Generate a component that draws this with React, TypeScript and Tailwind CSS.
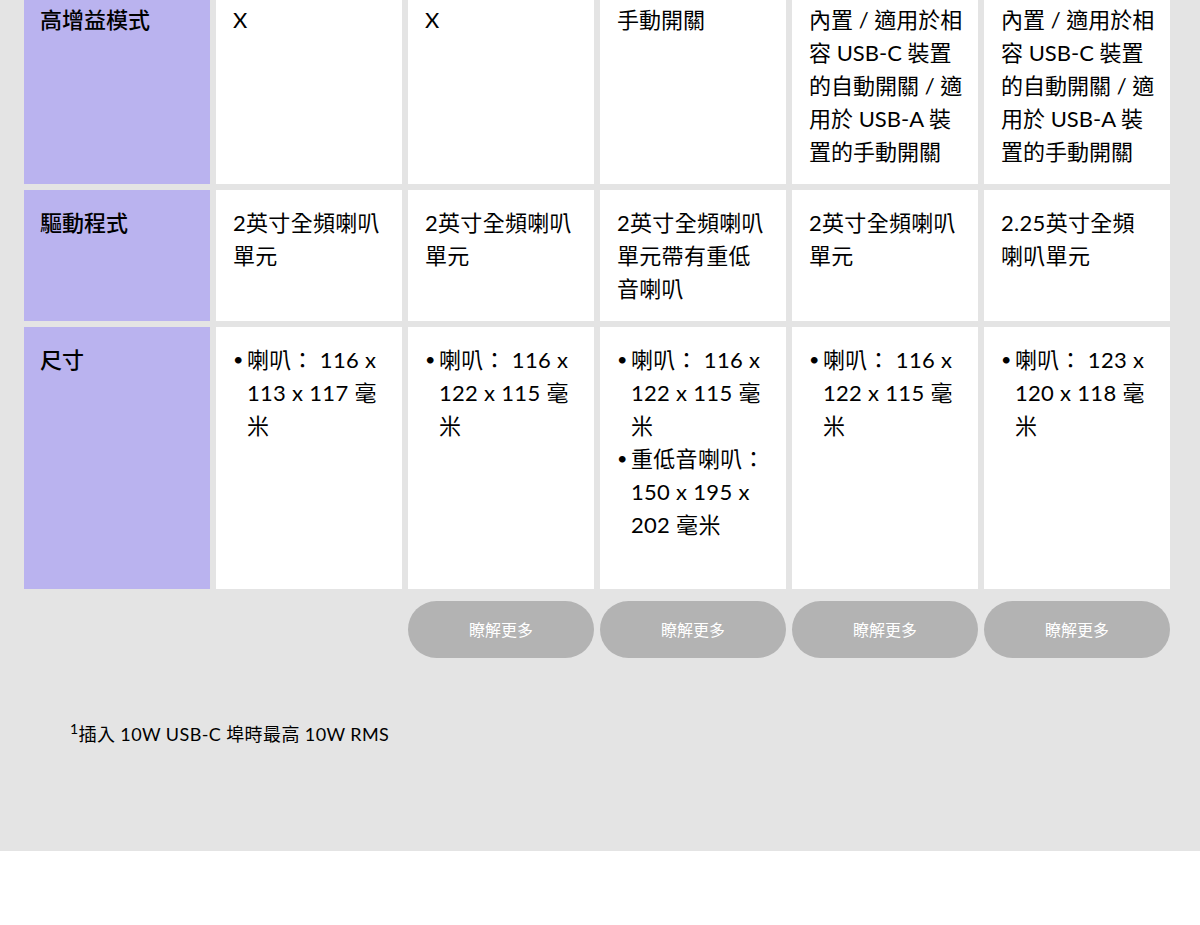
const font = { fontFamily: 'Lato, "Noto Sans CJK TC", sans-serif' }

const rows: { label: string; cells: (string | string[])[]; cellClass: string }[] = [
	{
		label: '高增益模式',
		cellClass: 'bg-white pl-[17px] pr-[13px] pt-[16px] pb-[16px]',
		cells: [
			'X',
			'X',
			'手動開關',
			'內置 / 適用於相容 USB-C 裝置的自動開關 / 適用於 USB-A 裝置的手動開關',
			'內置 / 適用於相容 USB-C 裝置的自動開關 / 適用於 USB-A 裝置的手動開關',
		],
	},
	{
		label: '驅動程式',
		cellClass: 'bg-white pl-[17px] pr-[16px] pt-[16px] pb-[16px] tracking-[0.3px]',
		cells: [
			'2英寸全頻喇叭單元',
			'2英寸全頻喇叭單元',
			'2英寸全頻喇叭單元帶有重低音喇叭',
			'2英寸全頻喇叭單元',
			'2.25英寸全頻喇叭單元',
		],
	},
	{
		label: '尺寸',
		cellClass: 'bg-white pl-[17px] pr-[16px] pt-[16px] pb-[48px] tracking-[0.3px]',
		cells: [
			['喇叭： 116 x 113 x 117 毫米'],
			['喇叭： 116 x 122 x 115 毫米'],
			['喇叭： 116 x 122 x 115 毫米', '重低音喇叭：150 x 195 x 202 毫米'],
			['喇叭： 116 x 122 x 115 毫米'],
			['喇叭： 123 x 120 x 118 毫米'],
		],
	},
]

const Bullets = ({ items }: { items: string[] }) => (
	<ul>
		{items.map((item, i) => (
			<li key={i} className="flex">
				<span className="w-[14px] shrink-0 text-[18px] leading-[33px]">•</span>
				<span>{item}</span>
			</li>
		))}
	</ul>
)

export default function App() {
	return (
		<div style={font} className="text-black">
			<section className="bg-[#e4e4e4] pb-[103px] overflow-hidden">
				{/* Comparison table */}
				<div className="ml-[24px] w-[1146px] -mt-[13px] grid grid-cols-6 gap-[6px] text-[22px] leading-[33px]">
					{rows.map((row) => (
						<div key={row.label} className="contents">
							<div className="bg-[#bab3ef] px-[16px] pt-[16px] font-medium">
								{row.label}
							</div>
							{row.cells.map((cell, i) => (
								<div key={i} className={row.cellClass}>
									{Array.isArray(cell) ? <Bullets items={cell} /> : cell}
								</div>
							))}
						</div>
					))}
				</div>

				{/* Buttons */}
				<div className="ml-[24px] w-[1146px] mt-[12px] grid grid-cols-6 gap-[6px]">
					<div />
					<div />
					{[0, 1, 2, 3].map((i) => (
						<a
							key={i}
							href="#"
							className="h-[57px] rounded-full bg-[#b3b3b3] text-white text-[16px] flex items-center justify-center"
						>
							瞭解更多
						</a>
					))}
				</div>

				{/* Footnote */}
				<p className="ml-[70px] mt-[63px] text-[18px] leading-[27px] tracking-[0.4px]">
					<sup className="text-[14px]">1</sup>插入 10W USB-C 埠時最高 10W RMS
				</p>
			</section>
			<div className="h-[74px] bg-white" />
		</div>
	)
}
